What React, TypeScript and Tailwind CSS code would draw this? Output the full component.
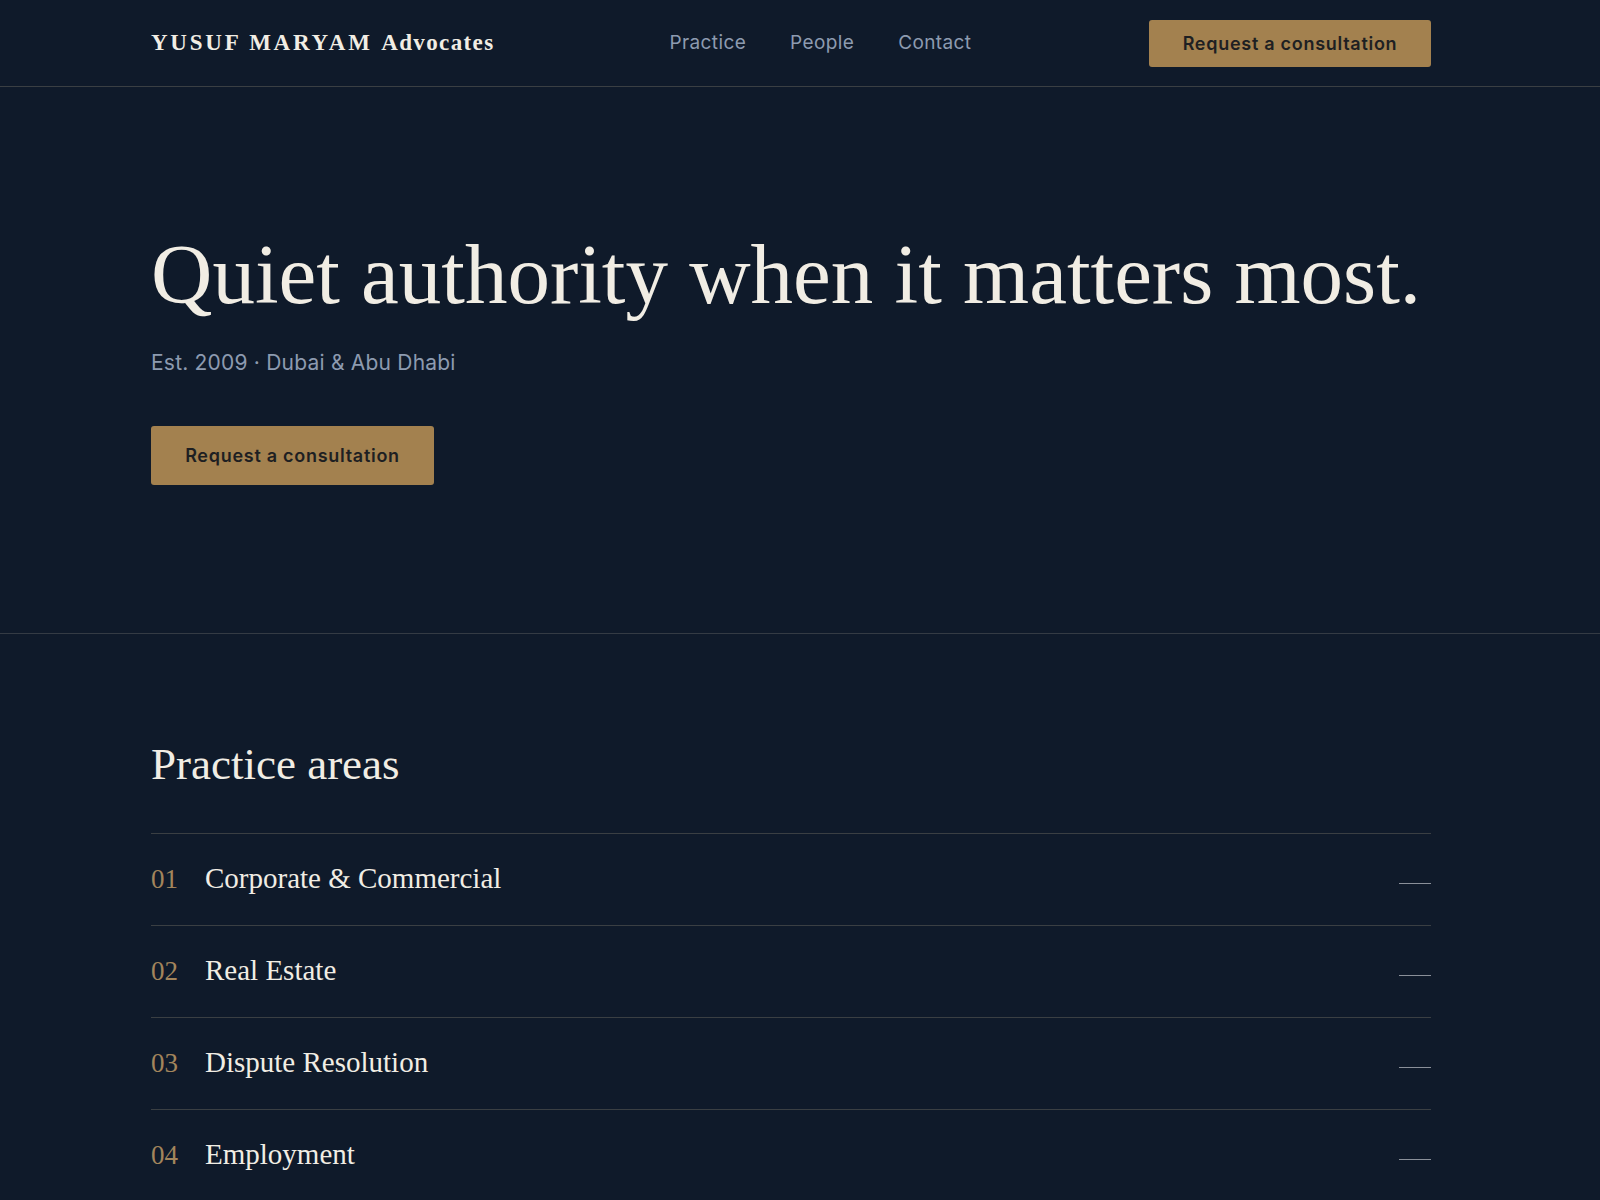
const SERIF = "font-['Liberation_Serif',serif]"
const SANS = "font-['Inter',sans-serif]"
// page column: 1280 of content, nudged a little to the left of centre
const COLUMN = 'mx-auto max-w-[1298px] pr-[18px]'

const NAV = ['Practice', 'People', 'Contact']

const AREAS = [
  { no: '01', name: 'Corporate & Commercial' },
  { no: '02', name: 'Real Estate' },
  { no: '03', name: 'Dispute Resolution' },
  { no: '04', name: 'Employment' },
]

function CtaButton({ className }: { className: string }) {
  return (
    <button
      className={`${SANS} rounded-[3px] bg-[#a3814f] text-[18px] font-semibold tracking-[0.04em] text-[#1e1f22] ${className}`}
    >
      Request a consultation
    </button>
  )
}

function Header() {
  return (
    <header className="border-b border-[#3a3f43]">
      <div className={`${COLUMN} flex h-[86px] items-center`}>
        <a className={`${SERIF} text-[23px] font-bold tracking-[0.12em] text-[#f1ede4]`}>
          YUSUF MARYAM <span className="tracking-[0.06em]">Advocates</span>
        </a>
        <nav className={`${SANS} ml-[175px] flex gap-[44px] text-[19px] tracking-[0.02em] text-[#8d9bb0]`}>
          {NAV.map((n) => (
            <a key={n}>{n}</a>
          ))}
        </nav>
        <CtaButton className="ml-auto h-[47px] w-[282px]" />
      </div>
    </header>
  )
}

function Hero() {
  return (
    <section className="border-b border-[#343b44]">
      <div className={`${COLUMN} pt-[145px] pb-[148px]`}>
        <h1 className={`${SERIF} whitespace-nowrap text-[85px] leading-none text-[#f1ede4]`}>
          Quiet authority when it matters most.
        </h1>
        <p className={`${SANS} mt-[30px] text-[21px] tracking-[0.01em] text-[#8d9bb0]`}>
          Est. 2009 · Dubai &amp; Abu Dhabi
        </p>
        <CtaButton className="mt-[47px] h-[59px] w-[283px]" />
      </div>
    </section>
  )
}

function PracticeAreas() {
  return (
    <section className={`${COLUMN} pt-[108px]`}>
      <h2 className={`${SERIF} text-[45px] leading-none text-[#f1ede4]`}>Practice areas</h2>
      <ul className="mt-[46px] border-t border-[#3a3f43]">
        {AREAS.map((a) => (
          <li key={a.no} className="flex h-[92px] items-center border-b border-[#3a3f43]">
            <span className={`${SERIF} w-[54px] text-[27px] text-[#a3855c]`}>{a.no}</span>
            <span className={`${SERIF} text-[29px] text-[#f1ede4]`}>{a.name}</span>
            <span className="ml-auto mt-[8px] h-px w-[32px] bg-[#8a9099]" />
          </li>
        ))}
      </ul>
    </section>
  )
}

export default function App() {
  return (
    <div className="min-h-screen bg-[#0f1a2a]">
      <Header />
      <Hero />
      <PracticeAreas />
    </div>
  )
}
